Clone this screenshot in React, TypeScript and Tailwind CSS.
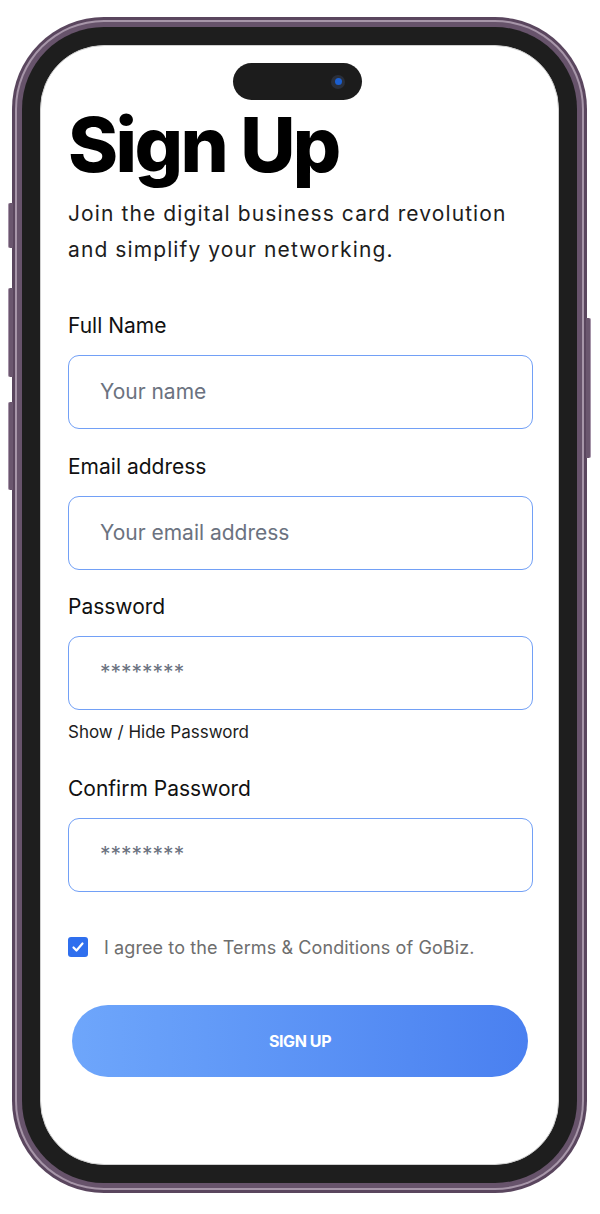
import React from "react";

const font = { fontFamily: "Inter, 'Noto Sans', sans-serif" };

function Field({ label, placeholder, mt }: { label: string; placeholder: string; mt: string }) {
  return (
    <div className={`flex flex-col ${mt}`}>
      <div className="text-[21px] leading-[24px] text-[#111]">{label}</div>
      <div className="mt-[17px] h-[74px] rounded-[11px] border-[1.5px] border-[#72a0f6] flex items-center pl-[31px]">
        <span className="text-[21px] text-[#6b7280]">{placeholder}</span>
      </div>
    </div>
  );
}

export default function App() {
  return (
    <div className="w-[600px] h-[1214px] bg-white pl-[12px] pt-[17px]" style={font}>
      <div className="relative w-[575px] h-[1176px]">
        {/* side buttons */}
        <div className="absolute left-[-4px] top-[186px] w-[5px] h-[45px] rounded-l-[2px] bg-[#6a566e] border-l border-[#a593a8]" />
        <div className="absolute left-[-4px] top-[271px] w-[5px] h-[89px] rounded-l-[2px] bg-[#6a566e] border-l border-[#a593a8]" />
        <div className="absolute left-[-4px] top-[385px] w-[5px] h-[88px] rounded-l-[2px] bg-[#6a566e] border-l border-[#a593a8]" />
        <div className="absolute right-[-4px] top-[301px] w-[5px] h-[140px] rounded-r-[2px] bg-[#6a566e] border-r border-[#a593a8]" />
        {/* frame */}
        <div className="w-full h-full rounded-[92px] bg-[#5a465e] p-[3px]">
          <div className="w-full h-full rounded-[89px] bg-[#a796a9] p-[2px]">
            <div className="w-full h-full rounded-[87px] bg-[#67536b] p-[5px]">
              <div className="w-full h-full rounded-[82px] bg-[#1e1e1e] p-[18px]">
                <div className="relative w-full h-full rounded-[64px] bg-white overflow-hidden border border-[#d0d0d0]">
                  {/* dynamic island */}
                  <div className="absolute left-[192px] top-[17px] w-[129px] h-[37px] rounded-full bg-[#1c1c1c] flex items-center justify-end pr-[17px]">
                    <div className="w-[14px] h-[14px] rounded-full bg-[#2a2f3a] flex items-center justify-center">
                      <div className="w-[7px] h-[7px] rounded-full bg-[#1b5fd0]" />
                    </div>
                  </div>
                  <div className="flex flex-col pl-[27px] pr-[25px] pt-[60px]">
                    <h1 className="text-[76px] leading-[76px] font-extrabold tracking-[-2.6px] text-black">Sign Up</h1>
                    <p className="mt-[14px] text-[21px] leading-[36px] tracking-[1.1px] text-[#1d1d1d]">
                      Join the digital business card revolution
                      <br />
                      and simplify your networking.
                    </p>
                    <Field label="Full Name" placeholder="Your name" mt="mt-[46px]" />
                    <Field label="Email address" placeholder="Your email address" mt="mt-[26px]" />
                    <Field label="Password" placeholder="********" mt="mt-[25px]" />
                    <div className="mt-[12px] text-[17px] leading-[20px] text-[#1d1d1d]">Show / Hide Password</div>
                    <Field label="Confirm Password" placeholder="********" mt="mt-[35px]" />
                    <div className="mt-[43px] flex items-center h-[24px]">
                      <div className="w-[20px] h-[20px] rounded-[3px] bg-[#2f6fee] flex items-center justify-center">
                        <svg width="14" height="14" viewBox="0 0 14 14" fill="none">
                          <path d="M2.5 7.5 L5.5 10.5 L11.5 3.5" stroke="white" strokeWidth="2.2" strokeLinecap="round" strokeLinejoin="round" />
                        </svg>
                      </div>
                      <span className="ml-[16px] text-[18px] tracking-[0.1px] text-[#6e6e6e]">I agree to the Terms &amp; Conditions of GoBiz.</span>
                    </div>
                    <button className="mt-[46px] ml-[4px] mr-[5px] h-[72px] rounded-full bg-gradient-to-r from-[#6ea6fb] to-[#4a80f0] text-white text-[16px] font-bold tracking-[-0.4px]">
                      SIGN UP
                    </button>
                  </div>
                </div>
              </div>
            </div>
          </div>
        </div>
      </div>
    </div>
  );
}
